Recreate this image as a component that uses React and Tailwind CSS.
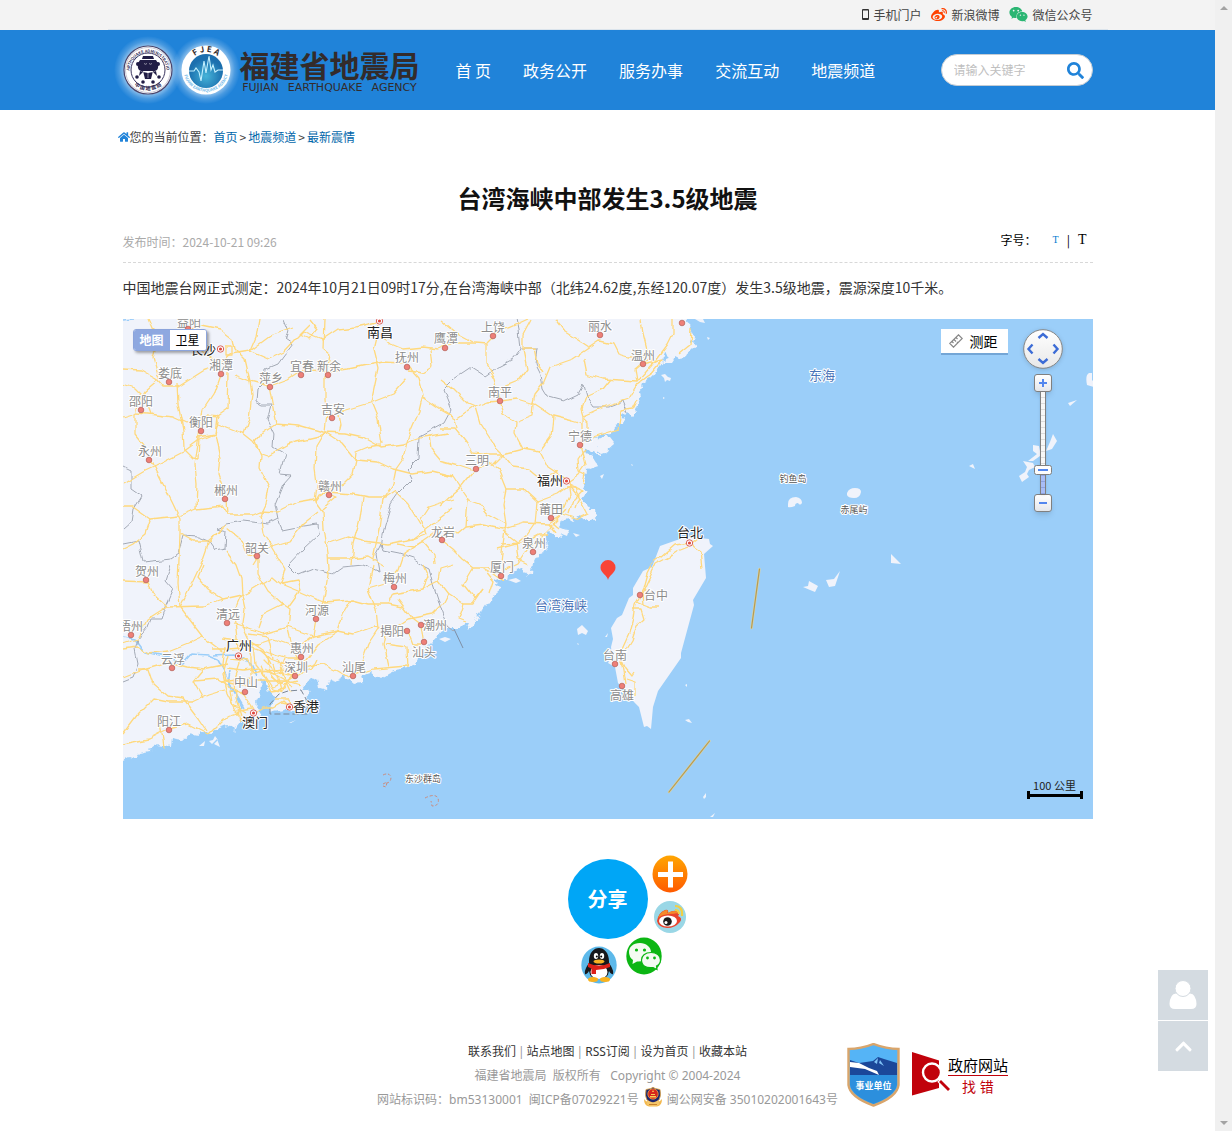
import React, { useState } from "react";
import { FaHome, FaWeibo, FaWeixin, FaSearch, FaChevronUp } from "react-icons/fa";

const navItems = ["首 页", "政务公开", "服务办事", "交流互动", "地震频道"];

const footerLinks = ["联系我们", "站点地图", "RSS订阅", "设为首页", "收藏本站"];

// [name, label x, label y, dot x, dot y]
const cities = [
  ["益阳", 66, 3, 65, 10],
  ["娄底", 47, 54, 46, 63],
  ["湘潭", 98, 46, 98, 55],
  ["邵阳", 18, 82, 18, 91],
  ["衡阳", 78, 103, 78, 112],
  ["永州", 27, 132, 26, 141],
  ["郴州", 103, 171, 102, 180],
  ["萍乡", 148, 59, 147, 68],
  ["宜春", 179, 47, 178, 56],
  ["新余", 206, 47, 205, 56],
  ["抚州", 284, 38, 284, 48],
  ["鹰潭", 323, 19, 322, 29],
  ["吉安", 210, 90, 209, 99],
  ["赣州", 207, 167, 206, 176],
  ["韶关", 134, 229, 134, 237],
  ["龙岩", 320, 213, 319, 221],
  ["上饶", 370, 8, 370, 17],
  ["南平", 377, 73, 377, 82],
  ["三明", 354, 141, 353, 150],
  ["丽水", 477, 7, 477, 16],
  ["温州", 520, 36, 520, 45],
  ["宁德", 457, 117, 457, 126],
  ["莆田", 428, 190, 428, 199],
  ["泉州", 411, 224, 410, 233],
  ["厦门", 379, 248, 378, 257],
  ["贺州", 24, 252, 23, 261],
  ["清远", 105, 295, 104, 304],
  ["梧州", 8, 307, 8, 316],
  ["云浮", 50, 340, 49, 349],
  ["惠州", 179, 329, 178, 338],
  ["深圳", 173, 348, 172, 357],
  ["中山", 123, 363, 122, 373],
  ["阳江", 46, 402, 46, 411],
  ["河源", 194, 291, 193, 300],
  ["梅州", 272, 259, 271, 268],
  ["揭阳", 269, 312, 284, 312],
  ["潮州", 312, 306, 298, 306],
  ["汕头", 301, 333, 301, 323],
  ["汕尾", 231, 348, 230, 357],
  ["台中", 533, 276, 517, 276],
  ["台南", 492, 336, 492, 345],
  ["高雄", 499, 376, 499, 367],
];

const capitals = [
  ["长沙", 80, 31, 97, 30],
  ["南昌", 257, 14, 256, 2],
  ["福州", 427, 162, 443, 162],
  ["广州", 116, 327, 115, 337],
  ["澳门", 132, 404, 130, 394],
  ["香港", 183, 388, 166, 388],
  ["台北", 567, 214, 566, 224],
];

const mainland =
  "M-5,-5 563,-5 566,4 567,10 570,17 568,22 572,27 565,32 562,38 556,39 552,37 546,42 542,33 540,43 530,57 519,65 517,70 519,77 515,87 512,94 509,97 503,92 500,97 499,105 493,107 490,113 484,116 470,118 477,121 484,117 490,125 484,130 482,134 474,128 477,136 468,132 462,128 463,134 470,138 472,142 475,147 464,150 463,160 460,170 464,173 459,180 463,185 467,190 473,190 474,197 467,203 459,200 457,197 450,202 445,199 440,200 435,208 445,212 443,216 437,214 440,219 432,217 427,213 422,220 425,230 417,232 417,238 412,239 410,243 409,253 404,256 399,249 390,251 385,256 384,261 377,261 372,263 380,269 374,274 369,279 362,288 363,284 357,293 353,301 347,311 343,303 337,309 325,309 317,313 312,321 305,328 295,338 293,346 285,349 273,351 267,354 258,361 253,358 248,354 238,356 240,363 230,364 223,358 213,363 207,361 204,371 197,369 195,359 185,363 180,369 188,374 182,379 184,389 175,387 170,393 160,390 147,393 152,379 147,373 143,363 137,359 138,373 133,383 137,393 133,403 123,406 117,403 110,412 107,405 100,406 90,413 80,412 72,419 68,414 60,421 48,419 47,428 35,426 28,431 17,433 12,440 7,438 0,442 -5,440Z";

const taiwan =
  "M537,227 554,221 565,218 577,219 586,220 587,225 590,227 581,235 583,259 570,281 571,286 558,334 558,339 535,372 530,388 528,410 524,407 521,408 516,388 511,383 502,371 495,364 492,348 485,344 489,336 488,328 490,320 488,309 494,299 499,296 506,279 510,276 510,269 520,252 529,248Z";

// small islands along the coast and in the open sea
const islands = [
  "M538,56 l4,-1 3,3 3,1 -1,3 -3,-1 -2,2 -1,-4z",
  "M543,40 l5,-2 3,3 -2,3 -6,0z",
  "M572,0 l8,0 2,4 -5,-1z",
  "M584,18 l3,1 -2,2z",
  "M540,78 l2,1 -2,1z",
  "M472,122 l8,-4 7,0 4,5 -6,4 -1,6 -6,2 -6,-4 3,-4 -4,-2z",
  "M463,136 l7,3 5,8 -8,3 -5,-4z",
  "M477,157 l4,-2 -2,5z",
  "M508,145 l2,1 -1,1z",
  "M450,214 l7,2 -4,2z",
  "M437,210 l9,1 -2,6 -5,-2z",
  "M385,261 l8,-2 5,3 -5,2z",
  "M316,320 l6,-2 6,2 -6,3z",
  "M454,310 l5,-4 6,6 -2,4 -4,-2 -4,2z",
  "M482,318 l3,-4 -1,4z",
  "M454,324 l2,1 -1,1z",
  "M86,422 l4,-1 2,-4 3,4 -4,4 6,3 -3,-8 -5,5z",
  "M76,427 l6,-5 -1,5z",
  "M166,404 l7,-3 -5,3z",
  "M562,366 l2,-1 0,3z",
  "M562,401 l4,-1 3,4 -4,-1z",
  "M580,478 l3,-4 0,4 -2,2z",
  "M587,498 l5,-4 -2,4z",
  "M665,185 q0,-7 8,-7 6,1 6,6 -2,3 -4,0 -3,0 -3,3 -5,2 -7,1z",
  "M724,174 q2,-5 8,-5 6,0 6,4 -1,6 -7,6 -6,0 -7,-3z",
  "M680,268 l5,-1 1,-5 9,5 -3,6 -5,-2z",
  "M703,261 l8,-1 6,-8 -5,15 -6,1z",
  "M768,235 l10,10 -10,-1z",
  "M846,147 l4,-2 2,5z",
  "M930,115 934,122 929,130 923,132 927,123Z",
  "M910,126 916,127 917,132 923,134 917,137 910,142 905,142 914,135 910,132Z",
  "M900,142 910,144 912,148 906,151 904,155 906,158 899,163 896,157 902,153 904,148Z",
  "M945,84 l9,-3 -7,6z",
  "M964,66 q-2,-10 2,-12 l3,0 0,7 2,2 0,5z",
];

const roads = [
  "M0,50 17,51 33,60 40,68 55,68 80,52 97,46",
  "M26,0 35,20 30,38 36,60 22,72 14,85 12,95 12,115 20,125 30,147",
  "M62,0 78,6 97,10 110,20 112,30",
  "M0,98 13,94 25,95 50,98 76,110",
  "M95,105 120,115 130,123 138,135 144,137 165,125 195,118 202,114",
  "M0,66 12,70 22,80 28,95",
  "M72,0 68,20 80,33 97,45 108,35 127,32 150,15 170,8",
  "M54,65 55,85 60,110 61,130 70,139 76,140 77,118",
  "M97,55 90,75 80,90 77,110 72,145 74,165 73,190",
  "M105,55 104,90 94,97 92,115 97,140 95,155 104,180 105,195",
  "M83,97 96,98 92,115 76,118",
  "M101,27 109,27 109,37 103,37 103,28",
  "M112,56 127,62 146,67 165,60 180,50 205,53 225,50 260,43 280,44",
  "M112,30 122,40 127,62 129,75 126,100 121,115",
  "M127,32 145,40 160,33 172,20 180,12 200,20 215,10 232,8 255,3",
  "M136,0 133,18 127,32",
  "M146,68 150,90 153,104 175,106 200,113 222,114 240,118 258,128 280,125 300,118 325,114",
  "M153,104 140,113 132,123 138,137 137,150 146,168 143,185 137,198",
  "M201,0 200,30 206,35 202,55 202,80 204,95 202,113 193,128 192,150 194,165 192,182 200,193 201,210 205,235",
  "M187,0 195,10 187,20 176,15 186,5",
  "M216,96 218,106 216,114",
  "M256,5 250,30 255,50 248,83 255,100 259,125",
  "M256,15 268,25 280,30 300,28 316,30",
  "M316,30 330,24 352,24",
  "M284,47 296,60 300,75 296,92 288,110 284,123 280,140 273,150 270,165 260,180 256,210 250,240",
  "M284,52 300,54 310,48 308,30",
  "M205,98 220,92 247,84 270,75 283,60",
  "M300,78 315,88 330,98",
  "M202,113 220,125 233,141 255,143 270,150 290,155 310,152 330,157",
  "M232,141 233,133 245,128 258,126",
  "M306,116 308,130 318,142",
  "M233,141 230,155 220,165 205,172 192,180",
  "M205,173 230,175 245,178 263,178 272,172 285,185 297,205",
  "M192,182 196,175 204,174 214,178 200,190",
  "M0,165 20,153 33,147 60,133 75,122 92,115",
  "M31,147 40,165 50,185 57,200 57,215 70,222 85,222 105,205",
  "M0,188 10,188 27,200 55,197 73,190 100,187 105,195 130,195 137,192 155,193 175,183 192,180",
  "M27,200 22,215 10,225 0,230",
  "M57,215 56,240 55,265 57,288",
  "M100,207 85,225 78,245 70,262 57,288",
  "M105,210 120,222 125,237 135,238 130,246",
  "M137,195 140,215 150,230 162,250 158,265",
  "M145,229 165,223 180,205 195,193",
  "M205,225 225,218 240,222 265,225 290,220 310,205 330,190",
  "M240,178 237,200 230,225 228,246",
  "M205,235 206,250 203,268 200,283",
  "M206,240 225,240 245,238 262,248",
  "M275,225 290,228 300,222 311,235 312,245",
  "M290,220 303,215 297,200 305,188 330,180",
  "M317,0 335,15 350,23",
  "M363,24 372,15 405,0",
  "M352,24 363,25 363,45 372,60 377,80 375,85",
  "M377,82 395,80 412,85 430,97 450,102 460,105",
  "M317,60 330,70 345,85 352,88 365,83 377,82",
  "M317,91 333,100 350,88",
  "M317,110 333,110 345,125 350,133 365,135",
  "M333,100 335,110",
  "M352,88 357,105 370,125 380,135 400,130 417,133 428,118 430,97",
  "M377,85 380,95 393,103 392,115 400,130",
  "M365,135 380,135 390,148 405,150 417,160 435,152",
  "M411,85 410,97 395,103",
  "M410,85 412,75 420,65 427,48 450,40 465,30 477,22 490,25 495,35 505,38 520,38",
  "M400,30 412,30 415,45 420,52",
  "M408,0 400,15 400,30 404,50 395,62 375,70",
  "M433,0 442,12 455,20 467,28",
  "M460,40 463,55 480,60 515,62 530,45 545,25 550,15 550,0",
  "M518,0 520,15 525,35 530,45",
  "M520,45 540,40 528,55 515,65",
  "M515,62 513,50 525,40",
  "M515,64 505,80 480,88 460,97 458,90 462,78 480,70 488,60",
  "M515,80 510,90 498,92 495,110 470,118",
  "M460,98 465,103 465,112",
  "M460,98 460,112 458,130 462,145 455,155 445,162 447,175 440,190",
  "M462,130 455,140 456,152 462,155 460,165",
  "M445,165 457,180 465,195 455,200 440,195",
  "M445,165 460,172 450,182 446,195",
  "M443,168 452,168 456,178 452,190",
  "M417,133 425,148 443,160",
  "M555,35 567,25 568,10",
  "M317,142 335,147 350,152 370,145 380,135",
  "M365,143 375,150 383,170 400,170 414,183 435,175 445,168",
  "M383,170 380,185 383,205 380,225 378,245",
  "M317,155 330,158 338,170 345,180 343,208 335,215 320,208 300,222",
  "M338,168 350,153",
  "M317,187 330,175 338,168",
  "M343,180 357,185 365,195 383,205",
  "M343,208 360,206 380,210 400,204 425,205 440,195",
  "M414,183 412,205 405,215 393,225 375,230",
  "M444,190 430,205 420,215 405,230 395,245 380,252",
  "M380,212 393,222 395,240 405,245",
  "M378,225 398,224 415,215 425,215",
  "M425,205 433,215",
  "M428,205 436,212",
  "M317,220 330,230 340,240 350,248 365,248 372,255",
  "M350,248 340,265 352,280 360,270",
  "M357,248 370,255 380,262",
  "M360,250 370,262 366,275",
  "M0,262 25,263 30,275 44,288",
  "M0,325 15,320 25,300 44,288",
  "M57,288 70,305 80,318 100,333",
  "M44,288 80,287 100,280 118,276 130,270 150,258 158,265",
  "M80,246 75,258 85,270 100,280",
  "M118,276 110,295 113,310 115,330",
  "M103,232 113,246 118,260 119,276 122,290 120,305",
  "M130,232 135,240 135,255 145,272 160,285 167,290 165,310 170,330 178,345",
  "M158,265 175,262 178,270 165,288",
  "M158,265 175,272 200,283 230,281 245,285 265,285 280,288",
  "M110,305 125,310 140,315 165,308 190,317 215,312 230,315 250,308 270,310 284,312",
  "M135,310 140,295 160,285",
  "M200,283 193,300 190,317 180,325",
  "M180,345 195,325 215,312 220,295 228,281",
  "M250,246 245,270 253,290 255,310 245,325 238,345",
  "M265,285 270,275 300,270 315,262 325,275 340,285 350,285 360,270",
  "M245,270 262,265 275,250 280,235 300,222",
  "M300,270 305,258 300,246",
  "M315,262 317,250 330,246",
  "M340,285 335,300 343,303",
  "M270,310 285,300 310,295 320,285 325,275",
  "M262,325 284,328 285,349",
  "M285,312 290,325 298,325",
  "M263,310 260,325 265,348",
  "M275,280 290,300 298,306 300,320",
  "M0,330 15,328 25,335 45,333 65,325 80,318",
  "M0,358 20,350 45,343 65,348 80,350 105,345",
  "M15,350 25,350 30,365 45,378 60,380 75,400 83,412",
  "M0,415 15,395 30,380 45,383 70,383 85,376 105,370",
  "M0,425 25,420 45,410 65,405 85,415 100,400 115,395",
  "M37,405 40,420 41,430",
  "M70,362 95,360 120,375 130,390",
  "M80,350 70,362 80,380",
  "M105,336 100,355 105,375 115,395",
  "M178,350 200,345 215,352 225,358 250,350 285,347",
  "M180,348 165,360 150,368",
  // Pearl River Delta web
  "M88,330 105,330 130,328 150,335 165,340 178,340",
  "M98,320 115,322 135,325 150,320 178,330",
  "M102,328 100,345 103,362 125,367",
  "M107,340 125,342 130,355 145,352 160,350 172,357",
  "M115,325 117,345 112,360 113,380 118,395",
  "M130,325 132,345 140,355 150,370 160,373",
  "M123,325 128,338 128,365",
  "M105,350 120,352 135,350 150,355 165,352",
  "M98,362 115,360 128,358",
  "M138,345 142,360 148,372 162,370 170,355 165,345",
  "M145,338 147,355 155,365 172,357 190,350 195,340",
  "M150,345 155,360 158,372",
  "M135,362 148,362 165,362 178,366",
  "M142,350 160,360 170,368",
  "M155,340 160,355 168,373",
  "M137,330 148,340 165,347 180,345",
  "M118,305 125,320 140,330 148,345",
  "M125,315 145,318 148,330 150,340",
  "M140,340 150,350 165,355 180,352",
  "M148,358 160,366 175,362",
  "M162,340 158,350 164,362 160,372",
  "M122,373 108,372 110,385 122,392",
  "M130,394 140,388 150,388 160,382 166,388",
  "M153,380 165,380 168,386 158,384",
  "M117,403 115,390 128,388",
  // Taiwan
  "M566,224 552,226 545,232 538,238 530,243 524,255 520,270 517,276 512,285 510,300 506,315 500,328 497,338 500,352 502,365",
  "M575,220 565,228 555,232 546,238 533,245 526,260 519,275 520,285 513,282",
  "M566,224 578,233 580,250",
  "M520,285 528,288 536,288",
  "M510,290 518,290 521,300 513,307 508,322 503,330 498,345",
  "M497,340 502,350 508,357 510,354",
  "M503,360 512,363 512,376",
];

const borders = [
  "M160,0 165,12 163,20 170,25 160,38 155,45 143,50 142,62 134,70 133,82 140,86 148,86 144,100 151,115 150,128 162,135 157,155 168,156 160,165 152,185 155,200 145,205 120,202 105,205 93,210 103,213 102,230 92,232 85,222 75,218 60,217 55,235 48,240 20,243 15,222 0,225",
  "M155,200 160,211 180,207 195,205 196,215 180,230 165,246 175,256 190,250 210,255 220,248 240,246 256,253 253,235 258,225 260,232 275,235 290,240 300,247 306,250 310,265 315,280 320,297 325,307 331,312",
  "M258,228 262,205 268,185 275,175 290,160 285,150 295,140 296,118 320,105 328,90 320,70 330,60 348,48 362,57 375,48 390,40 397,30 395,10 393,0",
  "M398,30 415,30 413,45 418,55 420,70 425,78 440,82 455,75 460,66 463,78 470,88 485,88 500,82 505,95",
  "M0,148 8,152 8,170 18,177 10,190 8,203 0,210",
  "M48,246 43,262 50,270 42,288 38,300 28,300 25,308 15,320 12,330 15,345 10,358 0,362",
];

const Label = ({ x, y, size, color, children }) => (
  <text
    x={x}
    y={y}
    fontSize={size}
    fill={color}
    stroke="#fff"
    strokeWidth="2"
    paintOrder="stroke"
    strokeLinejoin="round"
    textAnchor="middle"
    dominantBaseline="central"
  >
    {children}
  </text>
);

const MapCanvas = () => (
  <svg
    viewBox="0 0 970 500"
    preserveAspectRatio="xMidYMid slice"
    className="w-full h-full block"
    role="img"
    aria-label="震中位置"
  >
    <defs>
      <filter id="rough" x="0" y="0" width="970" height="500" filterUnits="userSpaceOnUse">
        <feTurbulence type="fractalNoise" baseFrequency="0.13" numOctaves="3" seed="4" />
        <feDisplacementMap in="SourceGraphic" scale="9" xChannelSelector="R" yChannelSelector="G" />
      </filter>
      <filter id="bend" x="0" y="0" width="970" height="500" filterUnits="userSpaceOnUse">
        <feTurbulence type="fractalNoise" baseFrequency="0.07" numOctaves="2" seed="8" />
        <feDisplacementMap in="SourceGraphic" scale="6" xChannelSelector="R" yChannelSelector="G" />
      </filter>
    </defs>

    <rect width="970" height="500" fill="#9bcef9" />
    <path d={mainland} fill="#f0f3fb" filter="url(#rough)" />
    <path d={taiwan} fill="#f0f3fb" />
    {islands.map((d) => (
      <path key={d} d={d} fill="#f0f3fb" />
    ))}

    {/* Rivers */}
    <g fill="none" stroke="#9bcef9" strokeWidth="1.6" filter="url(#bend)">
      <path d="M0,318 12,320 22,334 50,340 60,346 70,335 85,336 95,340 103,355 110,370 118,388" />
      <path d="M90,336 110,335 128,345 134,358" />
      <path d="M108,352 106,365 114,378 120,388" />
      <path d="M0,1 12,0" />
    </g>

    {/* Province borders */}
    <g fill="none" stroke="#a3a9b4" strokeWidth="1" strokeLinejoin="round" filter="url(#bend)">
      {borders.map((d) => (
        <path key={d} d={d} />
      ))}
    </g>
    <path d="M331,310 340,329" stroke="#7f8fa5" fill="none" />
    <path
      d="M147,395 V385 L156,375 165,372 178,371 183,380 185,395 Z"
      fill="none"
      stroke="#7c8796"
      strokeDasharray="6 3"
    />

    {/* Roads */}
    <g fill="none" stroke="#ffd97d" strokeWidth="1.3" strokeLinejoin="round" filter="url(#bend)">
      {roads.map((d) => (
        <path key={d} d={d} />
      ))}
    </g>

    {/* Reefs */}
    <g fill="none" stroke="#c98d80" strokeDasharray="3 2">
      <path d="M260,456 q6,-3 8,2 q0,5 -4,6" />
      <path d="M260,465 l4,-2 -1,5 -3,-1" />
      <path d="M302,479 q10,-5 13,0 q2,8 -6,8 l-1,-5" />
    </g>

    {/* Dash line */}
    <g strokeLinecap="round">
      <path d="M636.5,250 L628.5,309" stroke="#d8d3a4" strokeWidth="2.4" />
      <path d="M636.5,250 L628.5,309" stroke="#b39a57" strokeWidth="1.2" />
      <path d="M586.5,422 L546,473" stroke="#d8d3a4" strokeWidth="2.4" />
      <path d="M586.5,422 L546,473" stroke="#b39a57" strokeWidth="1.2" />
    </g>

    {cities.map(([name, x, y]) => (
      <Label key={name} x={x} y={y - 1} size="12" color="#8c8c8c">{name}</Label>
    ))}
    {capitals.map(([name, x, y]) => (
      <Label key={name} x={x} y={y - 2} size="13" color="#222">{name}</Label>
    ))}
    <Label x={438} y={285} size="13" color="#4a74b8">台湾海峡</Label>
    <Label x={699} y={55} size="13" color="#4a74b8">东海</Label>
    <Label x={670} y={159} size="9" color="#555">钓鱼岛</Label>
    <Label x={731} y={190} size="9" color="#555">赤尾屿</Label>
    <Label x={300} y={459} size="9" color="#555">东沙群岛</Label>

    {cities.map(([name, , , x, y]) => (
      <circle key={name} cx={x} cy={y} r="2.8" fill="#ee7f78" stroke="#b9675f" strokeWidth="0.8" />
    ))}
    <circle cx="559" cy="4" r="2.8" fill="#ee7f78" stroke="#b9675f" strokeWidth="0.8" />
    {capitals.map(([name, , , x, y]) => (
      <g key={name}>
        <circle cx={x + 0.5} cy={y} r="3.2" fill="#fff" stroke="#d9635b" />
        <circle cx={x + 0.5} cy={y} r="1.6" fill="#e0473e" />
      </g>
    ))}

    {/* Epicenter pin */}
    <path
      d="M485,261 C484,256 477.500,254 477.500,248.500 A7.500,7.500 0 0 1 492.500,248.500 C492.500,254 486,256 485,261Z"
      fill="#f94436"
    />
  </svg>
);

const MapControls = () => {
  const [type, setType] = useState("地图");
  const [zoom, setZoom] = useState(7);

  return (
    <>
      <div className="absolute left-[10px] top-[10px] flex rounded-[3px] border border-[#8ba4dc] bg-white shadow-[2px_2px_3px_rgba(0,0,0,0.35)] overflow-hidden">
        {["地图", "卫星"].map((t) => (
          <button
            key={t}
            onClick={() => setType(t)}
            className={`h-5 px-[6px] text-xs leading-[18px] ${
              t === type ? "bg-[#8ea8e0] text-white font-bold" : "bg-white text-black"
            }`}
          >
            {t}
          </button>
        ))}
      </div>

      <button className="absolute right-[85px] top-[10px] flex items-center gap-[7px] h-6 pl-2 pr-[10px] bg-white text-sm text-black shadow-[0_2px_0_rgba(90,140,190,0.6)]">
        <svg width="14" height="14" viewBox="0 0 14 14" fill="none" stroke="#888" strokeWidth="1.2">
          <path d="M0.800,9.500 L9.500,0.800 13.200,4.500 4.500,13.200Z M3,7.500 l1.500,1.500 M5,5.500 l2,2 M7,3.500 l1.500,1.500 M9,8 l-1,1" />
        </svg>
        测距
      </button>

      <div className="absolute right-[30px] top-[10px] w-10 flex flex-col items-center">
        <button aria-label="平移" className="w-10 h-10">
          <svg width="40" height="40" viewBox="0 0 40 40" className="block drop-shadow-sm">
            <defs>
              <linearGradient id="pan" x1="0" y1="0" x2="0" y2="1">
                <stop offset="0" stopColor="#fff" />
                <stop offset="1" stopColor="#e8e8e8" />
              </linearGradient>
            </defs>
            <circle cx="20" cy="20" r="19.300" fill="url(#pan)" stroke="#858585" />
            <path
              d="M15.500,9 20,5 24.500,9 M15.500,30 20,34 24.500,30 M9.500,15.500 5.500,20 9.500,24.500 M30.500,15.500 34.500,20 30.500,24.500"
              fill="none"
              stroke="#3c6cd6"
              strokeWidth="2.400"
            />
          </svg>
        </button>
        <button
          aria-label="放大"
          onClick={() => setZoom((z) => Math.min(z + 1, 19))}
          className="mt-[5px] w-[18px] h-[18px] rounded-[3px] border border-[#808080] bg-gradient-to-b from-white to-gray-200 shadow-md flex items-center justify-center"
        >
          <svg width="8" height="8" viewBox="0 0 8 8" stroke="#5286ee" strokeWidth="2">
            <path d="M4,0 V8 M0,4 H8" />
          </svg>
        </button>
        <div className="relative w-[18px] h-[102px] flex justify-center">
          <div className="w-[6px] h-full border-x border-[#808080] flex flex-col shadow-sm">
            <div className="flex-1 bg-[repeating-linear-gradient(#f7f7f7_0_5px,#dcdcdc_5px_6px)]" />
            <div className="h-6 bg-[repeating-linear-gradient(#a8bdf7_0_5px,#8da3e0_5px_6px)]" />
          </div>
          <svg width="18" height="10" viewBox="0 0 18 10" className="absolute left-0 bottom-[19px]">
            <rect x="0.500" y="0.500" width="17" height="9" rx="2" fill="#fdfdfd" stroke="#808080" />
            <path d="M4,5 H14" stroke="#5286ee" strokeWidth="2" />
          </svg>
          <input
            type="range"
            aria-label="缩放级别"
            min="3"
            max="19"
            value={zoom}
            onChange={(e) => setZoom(Number(e.target.value))}
            className="absolute inset-0 w-full h-full opacity-0 [writing-mode:vertical-lr]"
          />
        </div>
        <button
          aria-label="缩小"
          onClick={() => setZoom((z) => Math.max(z - 1, 3))}
          className="w-[18px] h-[18px] rounded-[3px] border border-[#808080] bg-gradient-to-b from-white to-gray-200 shadow-md flex items-center justify-center"
        >
          <svg width="8" height="8" viewBox="0 0 8 8" stroke="#5286ee" strokeWidth="2">
            <path d="M0,4 H8" />
          </svg>
        </button>
      </div>

      <div className="absolute right-[10px] bottom-5 w-14 text-center text-[11px] leading-3 text-[#222]">
        100 公里
        <div className="h-2 border-x-3 border-black flex items-center">
          <div className="flex-1 h-[3px] bg-black" />
        </div>
      </div>
    </>
  );
};

const Logo = () => (
  <a href="#" className="flex items-center gap-[7px]">
    <svg width="110" height="80" viewBox="0 0 110 80" className="block overflow-visible" aria-hidden="true">
      <defs>
        <radialGradient id="halo">
          <stop offset="0.700" stopColor="#fff" stopOpacity="0.500" />
          <stop offset="0.850" stopColor="#fff" stopOpacity="0.180" />
          <stop offset="1" stopColor="#fff" stopOpacity="0" />
        </radialGradient>
        <radialGradient id="globe" cx="0.500" cy="0.650">
          <stop offset="0" stopColor="#45b3d8" />
          <stop offset="1" stopColor="#1b6fae" />
        </radialGradient>
        <path id="ringTop" d="M6.500,41 A18.500,18.500 0 1 1 43.500,41" />
        <path id="ringBottom" d="M3.500,42 A21.800,21.800 0 0 0 46.500,42" />
        <path id="fjea" d="M65,37 A18.300,18.300 0 0 1 101,37" />
        <path id="fjeaBottom" d="M61,44 A22.500,22.500 0 0 0 105,44" />
      </defs>
      <circle cx="25" cy="40" r="34" fill="url(#halo)" />
      <circle cx="83" cy="40" r="34" fill="url(#halo)" />

      <circle cx="25" cy="40" r="24" fill="#fff" stroke="#4a456c" strokeWidth="1.2" />
      <circle cx="25" cy="40" r="22.500" fill="none" stroke="#8f8ba5" strokeWidth="0.500" />
      <circle cx="25" cy="40" r="17" fill="#fff" stroke="#3b3660" />
      <text fontSize="4" fontWeight="bold" fill="#3b3660">
        <textPath href="#ringTop" startOffset="50%" textAnchor="middle">EARTHQUAKE ADMINISTRATION</textPath>
      </text>
      <text fontSize="5" fontWeight="bold" fill="#2b264d">
        <textPath href="#ringBottom" startOffset="50%" textAnchor="middle">中 国 地 震 局</textPath>
      </text>
      <g fill="#211d45">
        <path d="M20,26 h10 l1,3 h-12z M17,30 q-4,5 -1,10 q9,6 18,0 q3,-5 -1,-10z M20,41 h10 l-2,8 h-6z" />
        <circle cx="15" cy="34" r="2" />
        <circle cx="35" cy="34" r="2" />
        <circle cx="14" cy="47" r="1.800" />
        <circle cx="36" cy="47" r="1.800" />
        <circle cx="20" cy="52" r="1.800" />
        <circle cx="30" cy="52" r="1.800" />
        <path d="M17,41 l3,1 -4,4z M33,41 l-3,1 4,4z" />
      </g>
      <path d="M21,33.500 q1.500,1.500 3,0 M26,33.500 q1.500,1.500 3,0 M25,42 v6" stroke="#fff" strokeWidth="0.500" fill="none" />

      <circle cx="83" cy="40" r="24.500" fill="#fff" />
      <circle cx="83" cy="41" r="17" fill="url(#globe)" />
      <path
        d="M66,41 h5 l2,-3 3,4 2,9 3,-20 2,12 3,-17 2,14 2,-5 2,7 3,-2 h5"
        fill="none"
        stroke="#c5f1ff"
        strokeWidth="1.100"
      />
      <text fontSize="8" fontWeight="bold" fill="#342c2c">
        <textPath href="#fjea" startOffset="50%" textAnchor="middle">F J E A</textPath>
      </text>
      <text fontSize="4" fontWeight="bold" fill="#6fb8e8">
        <textPath href="#fjeaBottom" startOffset="50%" textAnchor="middle">FUJIAN EARTHQUAKE AGENCY</textPath>
      </text>
    </svg>
    <span className="flex flex-col text-[#332b2b]">
      <span className="text-3xl leading-9 font-bold">福建省地震局</span>
      <span className="flex gap-[9px] justify-center text-[11px] leading-3 font-['DejaVu_Sans',sans-serif]">
        <span>FUJIAN</span>
        <span>EARTHQUAKE</span>
        <span>AGENCY</span>
      </span>
    </span>
  </a>
);

const TopBar = () => (
  <div className="h-[30px] bg-[#f3f3f3]">
    <div className="max-w-[1000px] h-full mx-auto px-[15px] border-b border-[#dbe4ec] flex items-center justify-end gap-[10px] text-xs text-[#444]">
      <a href="#" className="flex items-center gap-1">
        <svg width="7" height="11" viewBox="0 0 7 11">
          <path d="M1,0 H6 Q7,0 7,1 V10 Q7,11 6,11 H1 Q0,11 0,10 V1 Q0,0 1,0Z M1,1.500 V9 H6 V1.500Z" fill="#333" fillRule="evenodd" />
        </svg>
        手机门户
      </a>
      <a href="#" className="flex items-center gap-1">
        <FaWeibo size={16} color="#ff4200" />
        新浪微博
      </a>
      <a href="#" className="flex items-center gap-1">
        <FaWeixin size={19} color="#2bb673" />
        微信公众号
      </a>
    </div>
  </div>
);

const Header = () => (
  <header className="bg-[#2083d9]">
    <div className="max-w-[1000px] h-20 mx-auto px-[15px] flex items-center">
      <Logo />
      <nav className="flex gap-8 ml-9 text-base leading-[22px] text-white">
        {navItems.map((item) => (
          <a key={item} href="#">{item}</a>
        ))}
      </nav>
      <form
        onSubmit={(e) => e.preventDefault()}
        className="ml-auto w-[152px] h-8 pl-3 pr-2 rounded-full bg-white border border-[#c4ccd4] flex items-center"
      >
        <input
          type="text"
          aria-label="搜索"
          placeholder="请输入关键字"
          className="flex-1 min-w-0 text-xs outline-none placeholder:text-[#c0c0c0]"
        />
        <button aria-label="搜索" className="shrink-0">
          <FaSearch size={17} color="#2083d9" />
        </button>
      </form>
    </div>
  </header>
);

const Share = () => (
  <div className="relative w-[120px] h-[130px] mx-auto">
    <button className="absolute left-5 top-1 w-20 h-20 rounded-full bg-[#00a6f6] text-white text-xl font-bold">
      分享
    </button>
    <a href="#" aria-label="更多" className="absolute left-[104px] top-0">
      <svg width="36" height="38" viewBox="0 0 36 38">
        <defs>
          <linearGradient id="more" x1="0" y1="0" x2="0" y2="1">
            <stop offset="0" stopColor="#ffa602" />
            <stop offset="1" stopColor="#ff5a00" />
          </linearGradient>
        </defs>
        <ellipse cx="18" cy="19" rx="17.500" ry="18.500" fill="url(#more)" />
        <path d="M18.500,6.500 V32.500 M6,19.500 H31" stroke="#fff" strokeWidth="5" />
      </svg>
    </a>
    <a href="#" aria-label="新浪微博" className="absolute left-[106px] top-[46px]">
      <svg width="32" height="32" viewBox="0 0 32 32">
        <circle cx="16" cy="16" r="16" fill="#9ad7e6" />
        <path d="M3,20 Q4,12 11,9 Q15,8 14,12 Q21,8 24,11 Q26,13 24,15 Q29,17 26,21 Q21,27 13,27 Q4,26 3,20Z" fill="#e8432c" />
        <path d="M4,17 Q6,11 12,9 Q15,9 13,12 Q22,8 24,12 Q20,13 14,13 Q7,14 4,17Z" fill="#f58a2a" />
        <ellipse cx="14" cy="20" rx="9" ry="5.500" fill="#fff" />
        <circle cx="13.500" cy="20.500" r="4.300" fill="#1a1a1a" />
        <circle cx="12" cy="21.500" r="1.500" fill="#fff" />
        <path d="M21,5 Q29,5 28,15 M21,9 Q25,9 25,13" fill="none" stroke="#f0cf45" strokeWidth="2.200" />
      </svg>
    </a>
    <a href="#" aria-label="微信" className="absolute left-[78px] top-[82px]">
      <svg width="36" height="38" viewBox="0 0 36 38">
        <ellipse cx="18" cy="19" rx="17.700" ry="18.500" fill="#0cb613" />
        <path d="M14,6 C7,6 3,10 3,15 Q3,20 7,23 L6.500,27 11,24.500 Q25,25 25,15 C25,10 20,6 14,6Z" fill="#f4fbf2" />
        <path d="M25,15.500 C19,15.500 15.500,19 15.500,23 C15.500,28.500 20,31.500 27,30.500 L31,32.500 30.500,29 Q34.500,27 34.500,23 C34.500,18.500 30.500,15.500 25,15.500Z" fill="#f4fbf2" stroke="#0cb613" strokeWidth="1.200" />
        <g fill="#0cb613">
          <circle cx="10.500" cy="13" r="1.600" />
          <circle cx="18.500" cy="13" r="1.600" />
          <circle cx="21.500" cy="21" r="1.400" />
          <circle cx="28.500" cy="21" r="1.400" />
        </g>
      </svg>
    </a>
    <a href="#" aria-label="QQ" className="absolute left-[33px] top-[91px]">
      <svg width="36" height="38" viewBox="0 0 36 38">
        <ellipse cx="18" cy="19" rx="17.700" ry="18.500" fill="#5db9ea" />
        <path d="M8,17 C7,-3 29,-3 28,17 Q33,24 32,28 Q30,29 28,25 Q27,33 18,33 Q9,33 8,25 Q6,29 4,28 Q3,24 8,17Z" fill="#17181c" />
        <ellipse cx="18" cy="26" rx="8.500" ry="7" fill="#fff" />
        <ellipse cx="15" cy="10" rx="2.200" ry="3" fill="#fff" />
        <ellipse cx="21" cy="10" rx="2.200" ry="3" fill="#fff" />
        <circle cx="15.800" cy="10.500" r="1" />
        <circle cx="20.200" cy="10.500" r="1" />
        <ellipse cx="18" cy="15.500" rx="5.500" ry="2" fill="#f7b023" />
        <path d="M7,17 Q18,22 29,17 L29,21 Q22,24 15,24 L15,28 10.500,28 10.500,22.500 7,21Z" fill="#dd2119" />
        <ellipse cx="12" cy="33.500" rx="5" ry="2.500" fill="#f9b21e" />
        <ellipse cx="24" cy="33.500" rx="5" ry="2.500" fill="#f9b21e" />
      </svg>
    </a>
  </div>
);

const PoliceBadge = () => (
  <svg width="20" height="20" viewBox="0 0 20 20" className="inline-block mx-1 -mt-2" aria-hidden="true">
    <path d="M1,12 Q1,19 6,19.500 H14 Q19,19 19,12 Q15,17 10,16 Q5,17 1,12Z" fill="#f3b950" />
    <path d="M10,0 L12,1.500 17,2.500 Q18.500,9 16,13 Q13,15 10,16 Q7,15 4,13 Q1.500,9 3,2.500 L8,1.500Z" fill="#1c2670" stroke="#e6a73e" strokeWidth="0.800" />
    <circle cx="10" cy="7" r="5.200" fill="#d8261d" stroke="#f3b64a" strokeWidth="0.700" />
    <path d="M10,3 l1,2 h-2z M7,9 h6 v1.500 h-6z M8,7 h4 v1 h-4z" fill="#f7cf56" />
    <path d="M4,13.500 q6,4 12,0 v4 q-6,3 -12,0z" fill="#f5c66a" />
    <path d="M6,17.500 h8" stroke="#c9822b" />
  </svg>
);

const Footer = () => (
  <footer className="grid grid-cols-[1fr_auto_1fr] mt-[55px] font-['Noto_Sans','Noto_Sans_CJK_SC',sans-serif] text-xs leading-6 text-[#999]">
    <div className="col-start-2 text-center whitespace-nowrap">
      <p>
        {footerLinks.map((link, i) => (
          <React.Fragment key={link}>
            {i > 0 && <span className="mx-[2px]">|</span>}
            <a href="#" className="text-[#333]">{link}</a>
          </React.Fragment>
        ))}
      </p>
      <p>福建省地震局&nbsp; 版权所有&nbsp;&nbsp; Copyright © 2004-2024</p>
      <p>
        网站标识码：bm53130001&nbsp; 闽ICP备07029221号
        <PoliceBadge />
        闽公网安备 35010202001643号
      </p>
    </div>
    <div className="flex items-start gap-3 pl-[9px] pt-[3px]">
      <svg width="53" height="64" viewBox="0 0 53 64" className="shrink-0" role="img" aria-label="事业单位">
        <path d="M1.500,6 Q14,6 26.500,1 Q39,6 51.500,6 V42 Q50,54 26.500,62.500 Q3,54 1.500,42Z" fill="#55b4f6" stroke="#d9a56b" strokeWidth="2.400" />
        <path d="M3,32 V17 L12,20 26,18 31,14 37,16 50,20 V32Z" fill="#1b4799" />
        <path d="M3,19 L12,20 22,25 30,28 32,32 18,26 3,24Z" fill="#fff" />
        <path d="M27,19 l4,-4 -1,6z M33,17 l4,6 -5,-3z" fill="#7fc2f6" />
        <path d="M3,32 H50 V42 Q48,53 26.500,61 Q5,53 3,42Z" fill="#2c8fdd" />
        <text x="26.500" y="46" fontSize="9" fontWeight="bold" fill="#fff" textAnchor="middle">事业单位</text>
      </svg>
      <a href="#" className="flex mt-2 text-black">
        <svg width="38" height="46" viewBox="0 0 38 46" className="block shrink-0">
          <path d="M0,1 L27,9.500 V37 L0,44.500Z" fill="#c1020b" />
          <circle cx="20" cy="21.500" r="9" fill="#c1020b" stroke="#fff" strokeWidth="2.400" />
          <path d="M27,29 L37,39" stroke="#fff" strokeWidth="5" />
          <path d="M28,30 L37,39" stroke="#c1020b" strokeWidth="2.800" />
        </svg>
        <span className="mt-1 -ml-[2px] text-[15px] leading-5 text-center">
          <span className="block border-b border-[#c1020b]">政府网站</span>
          <span className="block text-sm leading-[22px] text-[#c1020b]">找 错</span>
        </span>
      </a>
    </div>
  </footer>
);

const App = () => (
  <div lang="zh-CN" className="flex min-h-screen bg-white font-['Noto_Sans_CJK_SC',sans-serif]">
    <div className="flex-1 min-w-0">
      <TopBar />
      <Header />

      <div className="max-w-[1000px] mx-auto px-[10px] pt-[18px] flex items-center text-xs leading-[18px] text-[#444]">
        <FaHome size={12} color="#2083d9" />
        <span>您的当前位置：</span>
        <a href="#" className="text-[#0066aa]">首页</a>
        <span className="px-[2px]">&gt;</span>
        <a href="#" className="text-[#0066aa]">地震频道</a>
        <span className="px-[2px]">&gt;</span>
        <a href="#" className="text-[#0066aa]">最新震情</a>
      </div>

      <main className="max-w-[1000px] mx-auto px-[15px]">
        <h1 className="mt-[35px] text-2xl leading-[34px] font-bold text-[#111] text-center">
          台湾海峡中部发生3.5级地震
        </h1>
        <div className="mt-2 h-10 pb-[2px] flex items-center justify-between border-b border-dashed border-[#d8d8d8] text-xs">
          <time className="text-[#aaa]">发布时间：2024-10-21 09:26</time>
          <div className="flex items-center pr-[6px] pb-1 text-black">
            <span>字号：</span>
            <button className="ml-4 font-['Liberation_Serif',serif] text-[10px] text-[#0079d0]">T</button>
            <span className="mx-2">|</span>
            <button className="font-['Liberation_Serif',serif] text-sm">T</button>
          </div>
        </div>
        <p className="mt-[10px] text-sm leading-7 text-[#333]">
          中国地震台网正式测定：2024年10月21日09时17分,在台湾海峡中部（北纬24.62度,东经120.07度）发生3.5级地震，震源深度10千米。
        </p>
        <div className="relative mt-[18px] h-[500px] overflow-hidden">
          <MapCanvas />
          <MapControls />
        </div>
        <div className="mt-9">
          <Share />
        </div>
      </main>

      <Footer />
    </div>

    {/* Scroll strip */}
    <div className="w-[17px] bg-[#f0f0f0] flex flex-col items-center justify-between py-[6px]">
      <span className="border-x-4 border-b-4 border-transparent border-b-[#a3a3a3]" />
      <span className="border-x-4 border-t-4 border-transparent border-t-[#a3a3a3]" />
    </div>

    <div className="fixed right-6 bottom-[60px] flex flex-col gap-px">
      <button aria-label="用户中心" className="w-[50px] h-[50px] bg-[#d4dbe1] flex items-center justify-center">
        <svg width="28" height="30" viewBox="0 0 28 30" fill="#fff">
          <path d="M7,13.500 H21 Q27,14 27.500,24 Q27.500,29 22,29 H6 Q0.500,29 0.500,24 Q1,14 7,13.500Z" />
          <circle cx="14" cy="8.500" r="8" stroke="#d4dbe1" />
        </svg>
      </button>
      <button aria-label="返回顶部" className="w-[50px] h-[50px] bg-[#d4dbe1] flex items-center justify-center">
        <FaChevronUp size={19} color="#fff" />
      </button>
    </div>
  </div>
);

export default App;
